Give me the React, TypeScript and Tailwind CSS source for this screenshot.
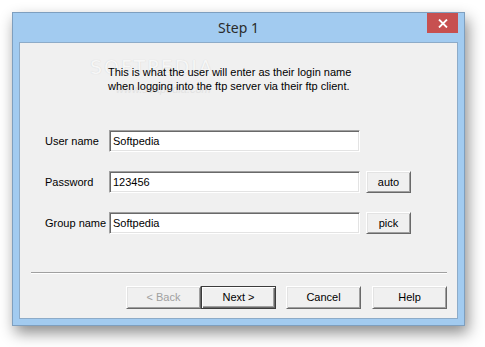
const sunken =
  "h-[22px] bg-white border border-t-[#a0a0a0] border-l-[#a0a0a0] border-b-white border-r-white shadow-[inset_1px_1px_0_#696969,inset_-1px_-1px_0_#e3e3e3] px-[3px] flex items-center text-[11px] text-black";

const raisedBox =
  "bg-[#f0f0f0] border border-t-white border-l-white border-b-[#696969] border-r-[#696969] shadow-[inset_1px_1px_0_#e3e3e3,inset_-1px_-1px_0_#a0a0a0] flex items-center justify-center text-[11px]";

const raised = `${raisedBox} text-black`;

const FIELDS = [
  { label: "User name", value: "Softpedia", action: null },
  { label: "Password", value: "123456", action: "auto" },
  { label: "Group name", value: "Softpedia", action: "pick" },
];

export default function App() {
  return (
    <div className="w-[485px] h-[347px] bg-white pt-[12px] pl-[12px] font-['Liberation_Sans',Arial,sans-serif]">
      <div className="w-[453px] h-[314px] border border-[#7e9fbf] bg-[#a2cbf0] flex flex-col shadow-[3px_7px_14px_rgba(0,0,0,0.45)]">
        {/* Title bar */}
        <div className="h-[29px] grid grid-cols-[37px_1fr_37px] items-start">
          <div />
          <div className="h-[29px] flex items-center justify-center font-['Noto_Sans',sans-serif] text-[14px] text-[#2b2b2b]">
            Step 1
          </div>
          <div className="h-[20px] w-[31px] bg-[#c75050] flex items-center justify-center">
            <svg width="10" height="9" viewBox="0 0 10 9">
              <path d="M1 0.5 L9 8.5 M9 0.5 L1 8.5" stroke="white" strokeWidth="1.8" />
            </svg>
          </div>
        </div>

        {/* Client area */}
        <div className="relative mx-[6px] mb-[6px] flex-1 bg-[#f0f0f0] border border-[#8dabc8] flex flex-col">
          {/* watermark */}
          <div className="absolute left-[70px] top-[14px] text-[19px] leading-[20px] tracking-[2px] font-['DejaVu_Sans',sans-serif] text-[#f6f6f6] [text-shadow:0_0_1px_#cfcfcf] select-none">
            SOFTPEDIA
          </div>
          <div className="absolute left-[96px] top-[40px] text-[11px] leading-[12px] italic text-[#e2e2e2] select-none">
            www.softpedia.com
          </div>

          <p className="relative ml-[88px] mt-[22px] text-[11px] leading-[14px] text-black">
            This is what the user will enter as their login name
            <br />
            when logging into the ftp server via their ftp client.
          </p>

          <div className="mt-[37px] pl-[25px] flex flex-col gap-[19px]">
            {FIELDS.map((f) => (
              <div key={f.label} className="flex items-center">
                <span className="w-[64px] text-[11px] text-black">{f.label}</span>
                <div className={`w-[251px] ${sunken}`}>{f.value}</div>
                {f.action && (
                  <div className={`ml-[6px] w-[45px] h-[22px] ${raised}`}>{f.action}</div>
                )}
              </div>
            ))}
          </div>

          <div className="mt-[38px] ml-[11px] w-[416px] h-[2px] border-t border-t-[#a0a0a0] border-b border-b-white" />

          <div className="mt-[12px] ml-[106px] flex">
            <div className={`w-[75px] h-[23px] ${raisedBox} text-[#a0a0a0]`}>&lt; Back</div>
            <div className="w-[75px] h-[23px] bg-[#f0f0f0] border border-[#3c3c3c] shadow-[inset_1px_1px_0_#fff,inset_-1px_-1px_0_#696969,inset_-2px_-2px_0_#a0a0a0] flex items-center justify-center text-[11px] text-black">
              Next &gt;
            </div>
            <div className={`ml-[10px] w-[75px] h-[23px] ${raised}`}>Cancel</div>
            <div className={`ml-[11px] w-[75px] h-[23px] ${raised}`}>Help</div>
          </div>
        </div>
      </div>
    </div>
  );
}
